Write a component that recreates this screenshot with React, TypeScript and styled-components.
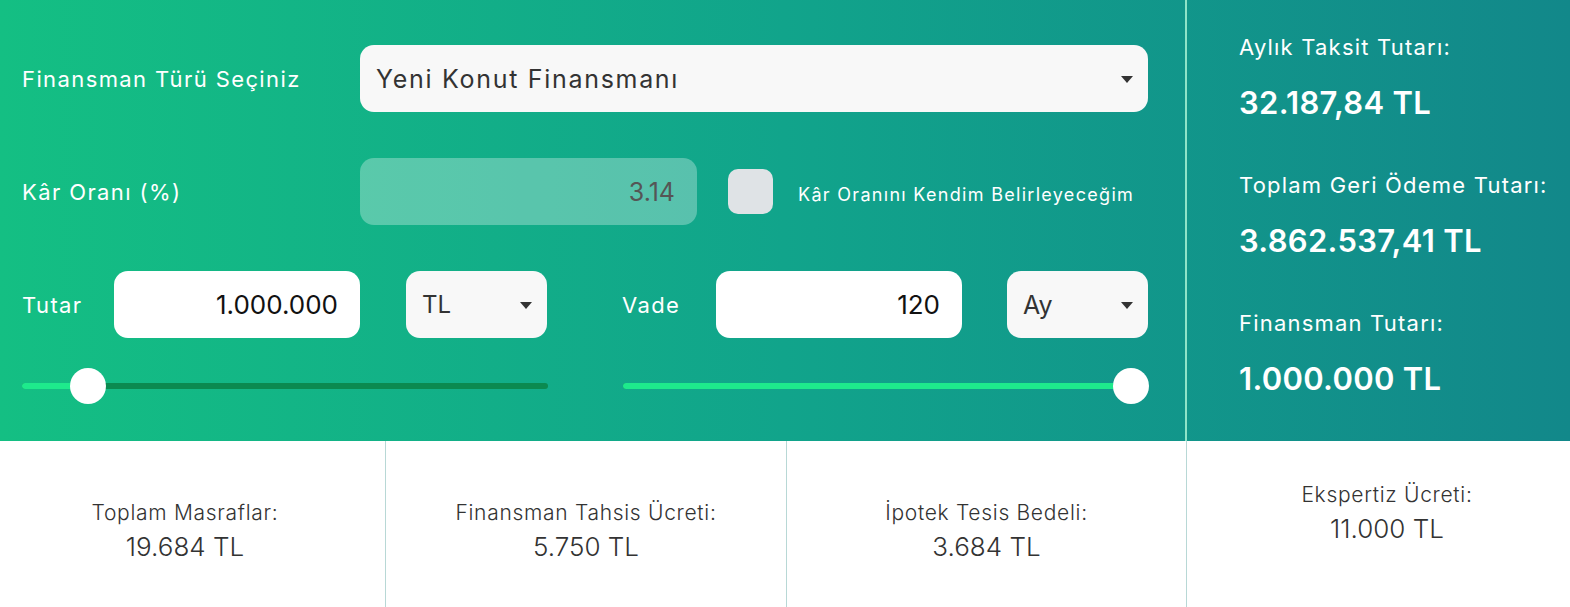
import React, {FC} from 'react';
import styled, {createGlobalStyle} from "styled-components";

const GlobalStyle = createGlobalStyle`
  body {
    margin: 0;
    font-family: Inter, "Noto Sans", sans-serif;
    background: #fff;
  }
  * { box-sizing: border-box; }
`

const Page = styled.div`
  width: 1570px;
  height: 607px;
  overflow: hidden;
`
const Top = styled.div`
  display: grid;
  grid-template-columns: 1187px 1fr;
  height: 441px;
  background: linear-gradient(90deg, #14bf83 0%, #11a48b 50%, #12888a 100%);
`
const FormPanel = styled.div`
  padding: 45px 37px 0 22px;
  border-right: 2px solid #8fe3c8;
`
const ResultPanel = styled.div`
  padding: 31px 0 0 52px;
  color: #fff;
  white-space: nowrap;
  overflow: hidden;
`
const ResultLabel = styled.div`
  font-size: 22px;
  letter-spacing: 1.2px;
  line-height: 32px;
  margin-top: 46px;
  &:first-child { margin-top: 0; }
`
const ResultValue = styled.div`
  font-size: 31px;
  font-weight: 600;
  letter-spacing: 0.3px;
  line-height: 40px;
  margin-top: 20px;
`

const Row = styled.div<{ $top: number }>`
  display: flex;
  align-items: center;
  margin-top: ${p => p.$top}px;
  height: 67px;
`
const Label = styled.div<{ $width: number }>`
  width: ${p => p.$width}px;
  flex-shrink: 0;
  color: #fff;
  font-size: 22px;
  letter-spacing: 1.4px;
`
const Field = styled.div<{ $width: number; $bg?: string; $color?: string; $align?: string; $size?: number; $ls?: number }>`
  width: ${p => p.$width}px;
  height: 67px;
  border-radius: 14px;
  background: ${p => p.$bg || '#fff'};
  color: ${p => p.$color || '#111'};
  font-size: ${p => p.$size || 24}px;
  letter-spacing: ${p => p.$ls || 0}px;
  white-space: nowrap;
  display: flex;
  align-items: center;
  justify-content: ${p => p.$align === 'right' ? 'flex-end' : 'space-between'};
  padding: 0 ${p => p.$align === 'right' ? 22 : 15}px 0 16px;
`
const Caret = styled.span`
  width: 0;
  height: 0;
  border-left: 6.5px solid transparent;
  border-right: 6.5px solid transparent;
  border-top: 7px solid #333;
  margin-top: 2px;
`
const Checkbox = styled.div`
  width: 45px;
  height: 45px;
  border-radius: 10px;
  background: #dfe3e6;
  margin-left: 31px;
  flex-shrink: 0;
`
const CheckLabel = styled.div`
  color: #fff;
  font-size: 18px;
  letter-spacing: 1.3px;
  white-space: nowrap;
  margin-left: 25px;
  margin-top: 6px;
`
const Half = styled.div`
  display: flex;
  align-items: center;
  width: 526px;
`
const Halves = styled.div<{ $top: number }>`
  display: flex;
  gap: 75px;
  margin-top: ${p => p.$top}px;
`
const Spacer = styled.div<{ $w: number }>`
  width: ${p => p.$w}px;
  flex-shrink: 0;
`
const SliderWrap = styled.div`
  position: relative;
  width: 526px;
  height: 36px;
  display: flex;
  align-items: center;
`
const Track = styled.div`
  width: 100%;
  height: 6px;
  border-radius: 3px;
  background: #0b8a50;
  overflow: hidden;
`
const Fill = styled.div`
  height: 100%;
  background: #1eea8c;
`
const Thumb = styled.div`
  position: absolute;
  top: 0;
  width: 36px;
  height: 36px;
  margin-left: -18px;
  border-radius: 50%;
  background: #fff;
`

const Bottom = styled.div`
  display: grid;
  grid-template-columns: 401px 401px 400px 400px;
  margin-left: -15px;
  height: 166px;
`
const Cell = styled.div<{ $top: number; $last?: boolean }>`
  border-right: ${p => p.$last ? 'none' : '1px solid #b8d8d6'};
  padding-top: ${p => p.$top}px;
  text-align: center;
  color: #333;
  font-weight: 300;
`
const CellLabel = styled.div`
  font-size: 21px;
  letter-spacing: 0.7px;
  line-height: 27px;
`
const CellValue = styled.div`
  font-size: 26px;
  line-height: 36px;
  margin-top: 3px;
`

interface SliderProps {
    pct: number
}

const Slider: FC<SliderProps> = ({pct}) => {
    const pos = 18 + (526 - 36) * pct
    return (
        <SliderWrap>
            <Track><Fill style={{width: pos}}/></Track>
            <Thumb style={{left: pos}}/>
        </SliderWrap>
    )
}

const costs = [
    {label: 'Toplam Masraflar:', value: '19.684 TL', top: 58},
    {label: 'Finansman Tahsis Ücreti:', value: '5.750 TL', top: 58},
    {label: 'İpotek Tesis Bedeli:', value: '3.684 TL', top: 58},
    {label: 'Ekspertiz Ücreti:', value: '11.000 TL', top: 40},
]

const results = [
    {label: 'Aylık Taksit Tutarı:', value: '32.187,84 TL'},
    {label: 'Toplam Geri Ödeme Tutarı:', value: '3.862.537,41 TL'},
    {label: 'Finansman Tutarı:', value: '1.000.000 TL'},
]

const App: FC = () => {
    return (
        <Page>
            <GlobalStyle/>
            <Top>
                <FormPanel>
                    <Row $top={0}>
                        <Label $width={338}>Finansman Türü Seçiniz</Label>
                        <Field $width={788} $bg="#f8f8f8" $color="#333" $size={25} $ls={1.7}>
                            Yeni Konut Finansmanı
                            <Caret/>
                        </Field>
                    </Row>
                    <Row $top={46}>
                        <Label $width={338}>Kâr Oranı (%)</Label>
                        <Field $width={337} $bg="rgba(255,255,255,0.3)" $color="#555" $align="right" $size={25}>3.14</Field>
                        <Checkbox/>
                        <CheckLabel>Kâr Oranını Kendim Belirleyeceğim</CheckLabel>
                    </Row>
                    <Halves $top={46}>
                        <Half>
                            <Label $width={92}>Tutar</Label>
                            <Field $width={246} $align="right" $size={26}>1.000.000</Field>
                            <Spacer $w={46}/>
                            <Field $width={141} $bg="#f8f8f8" $color="#333">TL<Caret/></Field>
                        </Half>
                        <Half>
                            <Label $width={94}>Vade</Label>
                            <Field $width={246} $align="right" $size={26}>120</Field>
                            <Spacer $w={45}/>
                            <Field $width={141} $bg="#f8f8f8" $color="#333" $size={25}>Ay<Caret/></Field>
                        </Half>
                    </Halves>
                    <Halves $top={30}>
                        <Slider pct={0.098}/>
                        <Slider pct={1}/>
                    </Halves>
                </FormPanel>
                <ResultPanel>
                    {results.map(r => (
                        <React.Fragment key={r.label}>
                            <ResultLabel>{r.label}</ResultLabel>
                            <ResultValue>{r.value}</ResultValue>
                        </React.Fragment>
                    ))}
                </ResultPanel>
            </Top>
            <Bottom>
                {costs.map((c, i) => (
                    <Cell key={c.label} $top={c.top} $last={i === costs.length - 1}>
                        <CellLabel>{c.label}</CellLabel>
                        <CellValue>{c.value}</CellValue>
                    </Cell>
                ))}
            </Bottom>
        </Page>
    );
};

export default App;
